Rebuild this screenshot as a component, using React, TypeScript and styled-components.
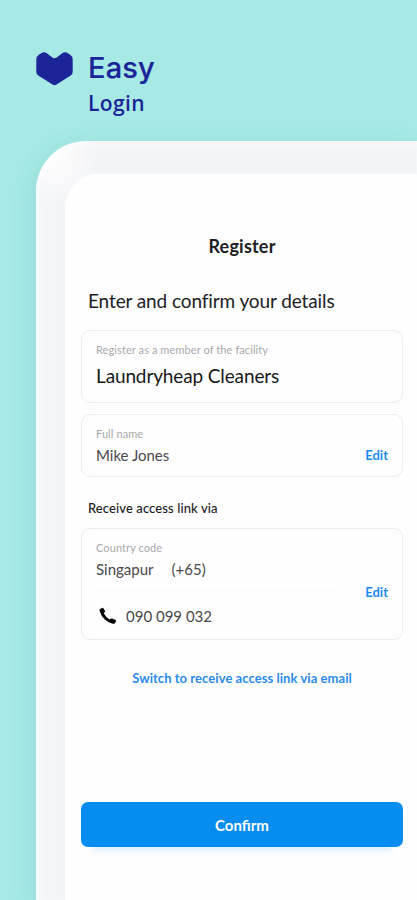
import React from "react";
import styled, { createGlobalStyle } from "styled-components";

const GlobalStyle = createGlobalStyle`
  *, *::before, *::after { box-sizing: border-box; }
  body { margin: 0; background: #a6e9e5; }
`;

const Page = styled.main`
  width: 100%;
  height: 900px;
  display: flex;
  flex-direction: column;
  overflow: hidden;
  background: #a6e9e5;
  color: #202024;
  font-family: Lato, sans-serif;
`;

const Brand = styled.header`
  flex: none;
  display: flex;
  align-items: flex-start;
  gap: 15px;
  height: 141px;
  padding: 51px 0 0 36px;
  color: #1c2598;
`;

const Heart = styled.svg`
  flex: none;
  width: 37px;
  height: 34px;
  margin-top: 1px;
`;

const BrandTitle = styled.h1`
  margin: 0;
  font-family: Inter, sans-serif;
  font-size: 29px;
  font-weight: 500;
  line-height: 34px;
  letter-spacing: 0.15px;
  -webkit-text-stroke: 0.2px currentColor;
`;

const BrandSubtitle = styled.p`
  margin: 5px 0 0;
  font-family: "Open Sans", sans-serif;
  font-size: 21px;
  font-weight: 600;
  line-height: 26px;
  letter-spacing: 0.4px;
`;

const Device = styled.div`
  flex: 1;
  display: flex;
  margin-left: 36px;
  padding: 33px 0 0 29px;
  border-radius: 50px 0 0 0;
  background: radial-gradient(circle at 12px 14px, rgba(255, 255, 255, 0.9) 6px, rgba(255, 255, 255, 0) 50px),
    linear-gradient(90deg, #f3f5fa, #f3f4f6 29px);
  box-shadow: -2px 6px 22px rgba(70, 170, 165, 0.2),
    inset 2px 3px 10px rgba(255, 255, 255, 0.6);
`;

const Screen = styled.section`
  flex: 1;
  display: flex;
  flex-direction: column;
  padding: 60px 14px 0 16px;
  border-radius: 33px 0 0 0;
  background: #fefefe;
`;

const Title = styled.h2`
  margin: 0;
  font-size: 18px;
  font-weight: 700;
  line-height: 24px;
  text-align: center;
  letter-spacing: 0.2px;
`;

const Lead = styled.p`
  margin: 31px 0 17px 7px;
  font-size: 19px;
  line-height: 24px;
  letter-spacing: -0.1px;
`;

const Card = styled.div<{ $height: number }>`
  display: flex;
  align-items: flex-start;
  justify-content: space-between;
  height: ${(p) => p.$height}px;
  margin-bottom: 11px;
  padding: 12px 14px 0;
  border: 1px solid #ededf0;
  border-radius: 9px;
`;

const Field = styled.div`
  display: flex;
  flex-direction: column;
  align-items: flex-start;
`;

const Label = styled.span`
  font-size: 11px;
  line-height: 14px;
  letter-spacing: 0.09px;
  color: #a9a9ad;
`;

const Value = styled.span<{ $large?: boolean }>`
  margin-top: ${(p) => (p.$large ? 7 : 5)}px;
  font-size: ${(p) => (p.$large ? 19 : 15)}px;
  line-height: ${(p) => (p.$large ? 24 : 18)}px;
  letter-spacing: ${(p) => (p.$large ? "-0.13px" : "0")};
  color: ${(p) => (p.$large ? "#17171a" : "#48484d")};
`;

const EditButton = styled.button<{ $offset: number }>`
  margin-top: ${(p) => p.$offset}px;
  padding: 0;
  border: 0;
  background: none;
  color: #1a8bf0;
  font: 700 13px/16px Lato, sans-serif;
`;

const SectionLabel = styled.p`
  margin: 11px 0 11px 7px;
  font-size: 13px;
  font-weight: 500;
  line-height: 18px;
  letter-spacing: 0.1px;
`;

const Country = styled.div`
  display: flex;
  gap: 18px;
  letter-spacing: 0.05px;
`;

const Divider = styled.hr`
  width: 240px;
  margin: 12px 0 15px;
  border: 0;
  border-top: 1px solid #f9f9fa;
`;

const Phone = styled.div`
  display: flex;
  align-items: center;
  gap: 9px;
  padding-left: 3px;
  font-size: 15px;
  line-height: 20px;
  color: #48484d;
`;

const SwitchLink = styled.button`
  align-self: center;
  margin-top: 19px;
  padding: 0;
  border: 0;
  background: none;
  color: #2b8bea;
  font: 700 13px/16px Lato, sans-serif;
  letter-spacing: 0.06px;
`;

const ConfirmButton = styled.button`
  height: 45px;
  margin-top: 116px;
  padding: 0;
  border: 0;
  border-radius: 7px;
  background: #078cf0;
  box-shadow: 0 15px 6px -12px rgba(7, 140, 240, 0.16);
  color: #fff;
  font: 700 15px/20px Lato, sans-serif;
`;

export default function App() {
  return (
    <Page>
      <GlobalStyle />
      <Brand>
        <Heart viewBox="0 0 37 34" aria-hidden="true">
          <path
            d="M2.800 2.800 5.500 1Q8-.4 10.500 1L16.300 5.600Q18.500 7 20.700 5.600L26.500 1Q29-.4 31.500 1L34.200 2.800Q36.700 4.500 36.700 7.500V20Q36.700 22.300 34.700 23.500L20.500 32.600Q18.500 33.900 16.500 32.600L2.300 23.500Q.3 22.300.3 20V7.500Q.3 4.500 2.800 2.800Z"
            fill="currentColor"
          />
        </Heart>
        <div>
          <BrandTitle>Easy</BrandTitle>
          <BrandSubtitle>Login</BrandSubtitle>
        </div>
      </Brand>
      <Device>
        <Screen>
          <Title>Register</Title>
          <Lead>Enter and confirm your details</Lead>
          <Card $height={73}>
            <Field>
              <Label>Register as a member of the facility</Label>
              <Value $large>Laundryheap Cleaners</Value>
            </Field>
          </Card>
          <Card $height={63}>
            <Field>
              <Label>Full name</Label>
              <Value>Mike Jones</Value>
            </Field>
            <EditButton $offset={20}>Edit</EditButton>
          </Card>
          <SectionLabel>Receive access link via</SectionLabel>
          <Card $height={112}>
            <Field>
              <Label>Country code</Label>
              <Country>
                <Value>Singapur</Value>
                <Value>(+65)</Value>
              </Country>
              <Divider />
              <Phone>
                <svg width="18" height="18" viewBox="0 0 18 18" aria-hidden="true">
                  <path
                    d="M1.200 2 3 .9q1-.5 1.600.5l1.400 2.500q.4.900-.5 1.500L4.600 6.100q1.900 3.900 5.800 6.300l1.200-.7q.8-.5 1.600-.1l3.300 1.400q1.100.6.400 1.700l-1 1.500q-.8.900-2.200.5Q3.900 14.200.6 4 .2 2.700 1.200 2Z"
                    fill="#050505"
                  />
                </svg>
                090 099 032
              </Phone>
            </Field>
            <EditButton $offset={43}>Edit</EditButton>
          </Card>
          <SwitchLink>Switch to receive access link via email</SwitchLink>
          <ConfirmButton>Confirm</ConfirmButton>
        </Screen>
      </Device>
    </Page>
  );
}
